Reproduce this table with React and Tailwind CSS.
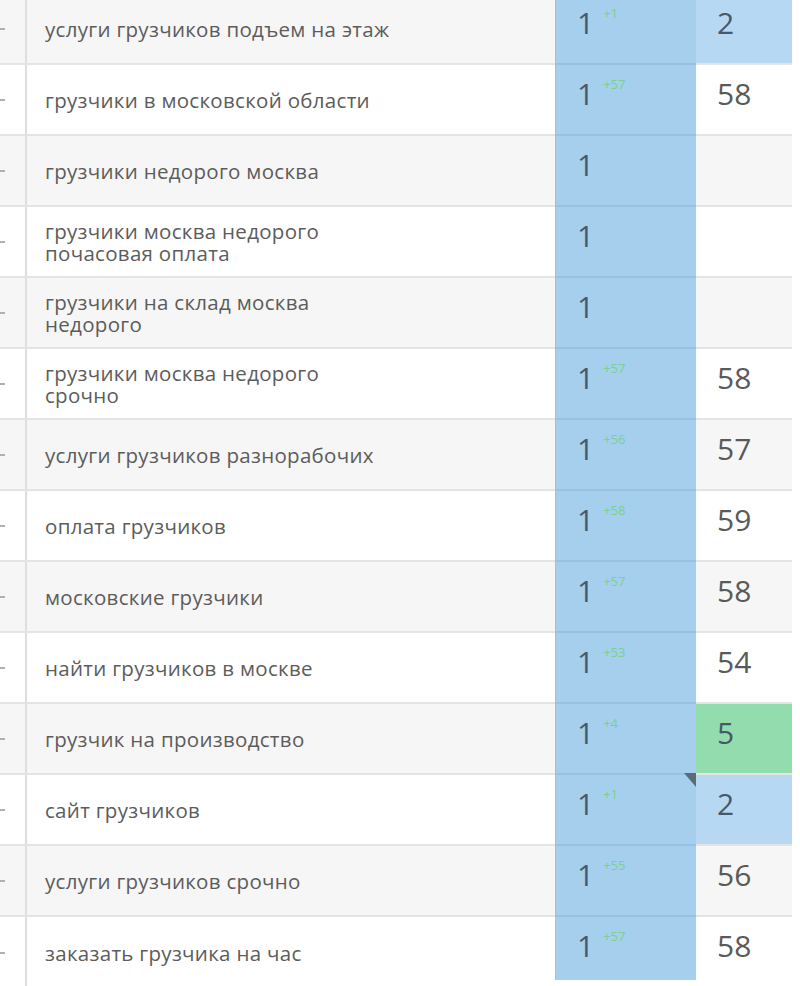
import React from "react";

const rows = [
  { t: ["услуги грузчиков подъем на этаж"], d: "+1", v: "2", vbg: "blue" },
  { t: ["грузчики в московской области"], d: "+57", v: "58" },
  { t: ["грузчики недорого москва"], d: null, v: "" },
  { t: ["грузчики москва недорого", "почасовая оплата"], d: null, v: "" },
  { t: ["грузчики на склад москва", "недорого"], d: null, v: "" },
  { t: ["грузчики москва недорого", "срочно"], d: "+57", v: "58" },
  { t: ["услуги грузчиков разнорабочих"], d: "+56", v: "57" },
  { t: ["оплата грузчиков"], d: "+58", v: "59" },
  { t: ["московские грузчики"], d: "+57", v: "58" },
  { t: ["найти грузчиков в москве"], d: "+53", v: "54" },
  { t: ["грузчик на производство"], d: "+4", v: "5", vbg: "green" },
  { t: ["сайт грузчиков"], d: "+1", v: "2", vbg: "blue", mark: true },
  { t: ["услуги грузчиков срочно"], d: "+55", v: "56" },
  { t: ["заказать грузчика на час"], d: "+57", v: "58", last: true },
];

export default function App() {
  return (
    <div className="w-[800px] h-[986px] overflow-hidden bg-white" style={{ fontFamily: '"Open Sans", "Noto Sans", sans-serif' }}>
      <div className="-mt-[6px] w-[792px] flex flex-col">
        {rows.map((r, i) => {
          const gray = i % 2 === 0;
          const rowBg = gray ? "bg-[#f6f6f6]" : "bg-white";
          const vBg =
            r.vbg === "blue" ? "bg-[#b6d8f2]" : r.vbg === "green" ? "bg-[#93dcae]" : rowBg;
          return (
            <div
              key={i}
              className={`grid grid-cols-[27px_528px_141px_96px] h-[71px] ${r.last ? "" : "border-b-2 border-[#e4e4e4]"} ${rowBg}`}
            >
              <div className="flex items-center border-r-2 border-[#dedede]">
                <div className="w-[5px] h-[2px] bg-[#b0b0b0]" />
              </div>
              <div className="flex items-center pl-[18px] text-[20.5px] tracking-[0.3px] text-[#5c5c5c] whitespace-nowrap">
                <div className="flex flex-col">
                  {r.t.map((l, j) => (
                    <span key={j} className="block h-[22px] leading-[22px]">{l}</span>
                  ))}
                </div>
              </div>
              <div className={`relative bg-[#a6cfee] border-l border-[#9cc6e6] pl-[21px] pt-[11px] flex items-start ${r.last ? "h-[63px]" : "-mb-[2px] border-b-2 border-[#98c2e3]"}`}>
                <span className="text-[30px] leading-[36px] text-[#46596b]">1</span>
                {r.d && (
                  <span className="ml-[9px] mt-[1px] text-[13px] leading-[14px] text-[#7bd08f]">{r.d}</span>
                )}
                {r.mark && (
                  <svg className="absolute right-0 -top-[2px]" width="12" height="14" viewBox="0 0 12 14">
                    <polygon points="0,0 12,0 12,14" fill="#5b6b78" />
                  </svg>
                )}
              </div>
              <div className={`${vBg} pl-[21px] pt-[11px]`}>
                <span className={`text-[30px] leading-[36px] ${r.vbg ? "text-[#46596b]" : "text-[#5a5a5a]"}`}>{r.v}</span>
              </div>
            </div>
          );
        })}
      </div>
    </div>
  );
}
